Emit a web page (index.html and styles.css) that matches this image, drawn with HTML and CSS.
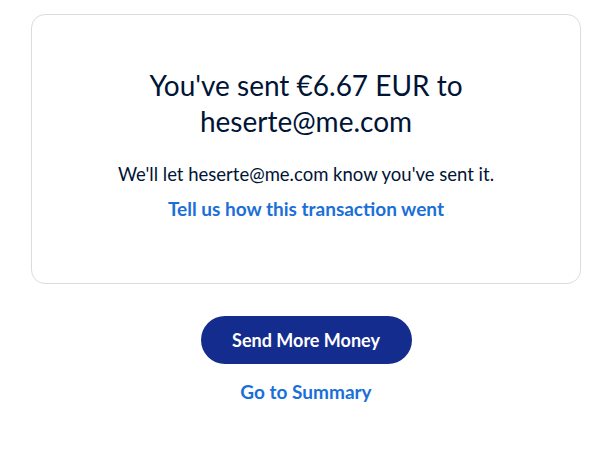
FILE: index.html
```html
<!DOCTYPE html>
<html lang="en">
<head>
<meta charset="utf-8">
<title>Sent</title>
<link rel="stylesheet" href="styles.css">
</head>
<body>
<main class="page">
  <section class="card">
    <h1 class="title">You've sent €6.67 EUR to heserte@me.com</h1>
    <p class="note">We'll let heserte@me.com know you've sent it.</p>
    <a class="link" href="#">Tell us how this transaction went</a>
  </section>
  <div class="actions">
    <button class="btn" type="button">Send More Money</button>
    <a class="link" href="#">Go to Summary</a>
  </div>
</main>
</body>
</html>
```
FILE: styles.css
```css
* { box-sizing: border-box; }
html, body { margin: 0; padding: 0; background: #fff; }
body {
  font-family: "Lato", "Open Sans", sans-serif;
  color: #001435;
}
.page {
  padding: 14px 27px 0 31px;
}
.card {
  border: 1px solid #dcdcdc;
  border-radius: 14px;
  height: 270px;
  display: flex;
  flex-direction: column;
  align-items: center;
  padding: 52px 40px 0;
  text-align: center;
}
.title {
  margin: 0;
  font-size: 28px;
  line-height: 36px;
  font-weight: 400;
  width: 340px;
}
.note {
  margin: 23px 0 0;
  font-size: 18.5px;
  line-height: 24px;
}
.link {
  display: block;
  margin-top: 11px;
  color: #1a6fd8;
  font-weight: 700;
  font-size: 19px;
  line-height: 24px;
  text-decoration: none;
}
.actions {
  display: flex;
  flex-direction: column;
  align-items: center;
  padding-top: 32px;
}
.btn {
  width: 211px;
  height: 48px;
  border: none;
  border-radius: 24px;
  background: #142c8e;
  color: #fff;
  font-family: inherit;
  font-weight: 700;
  font-size: 18px;
}
.actions .link { margin-top: 16px; }
```
